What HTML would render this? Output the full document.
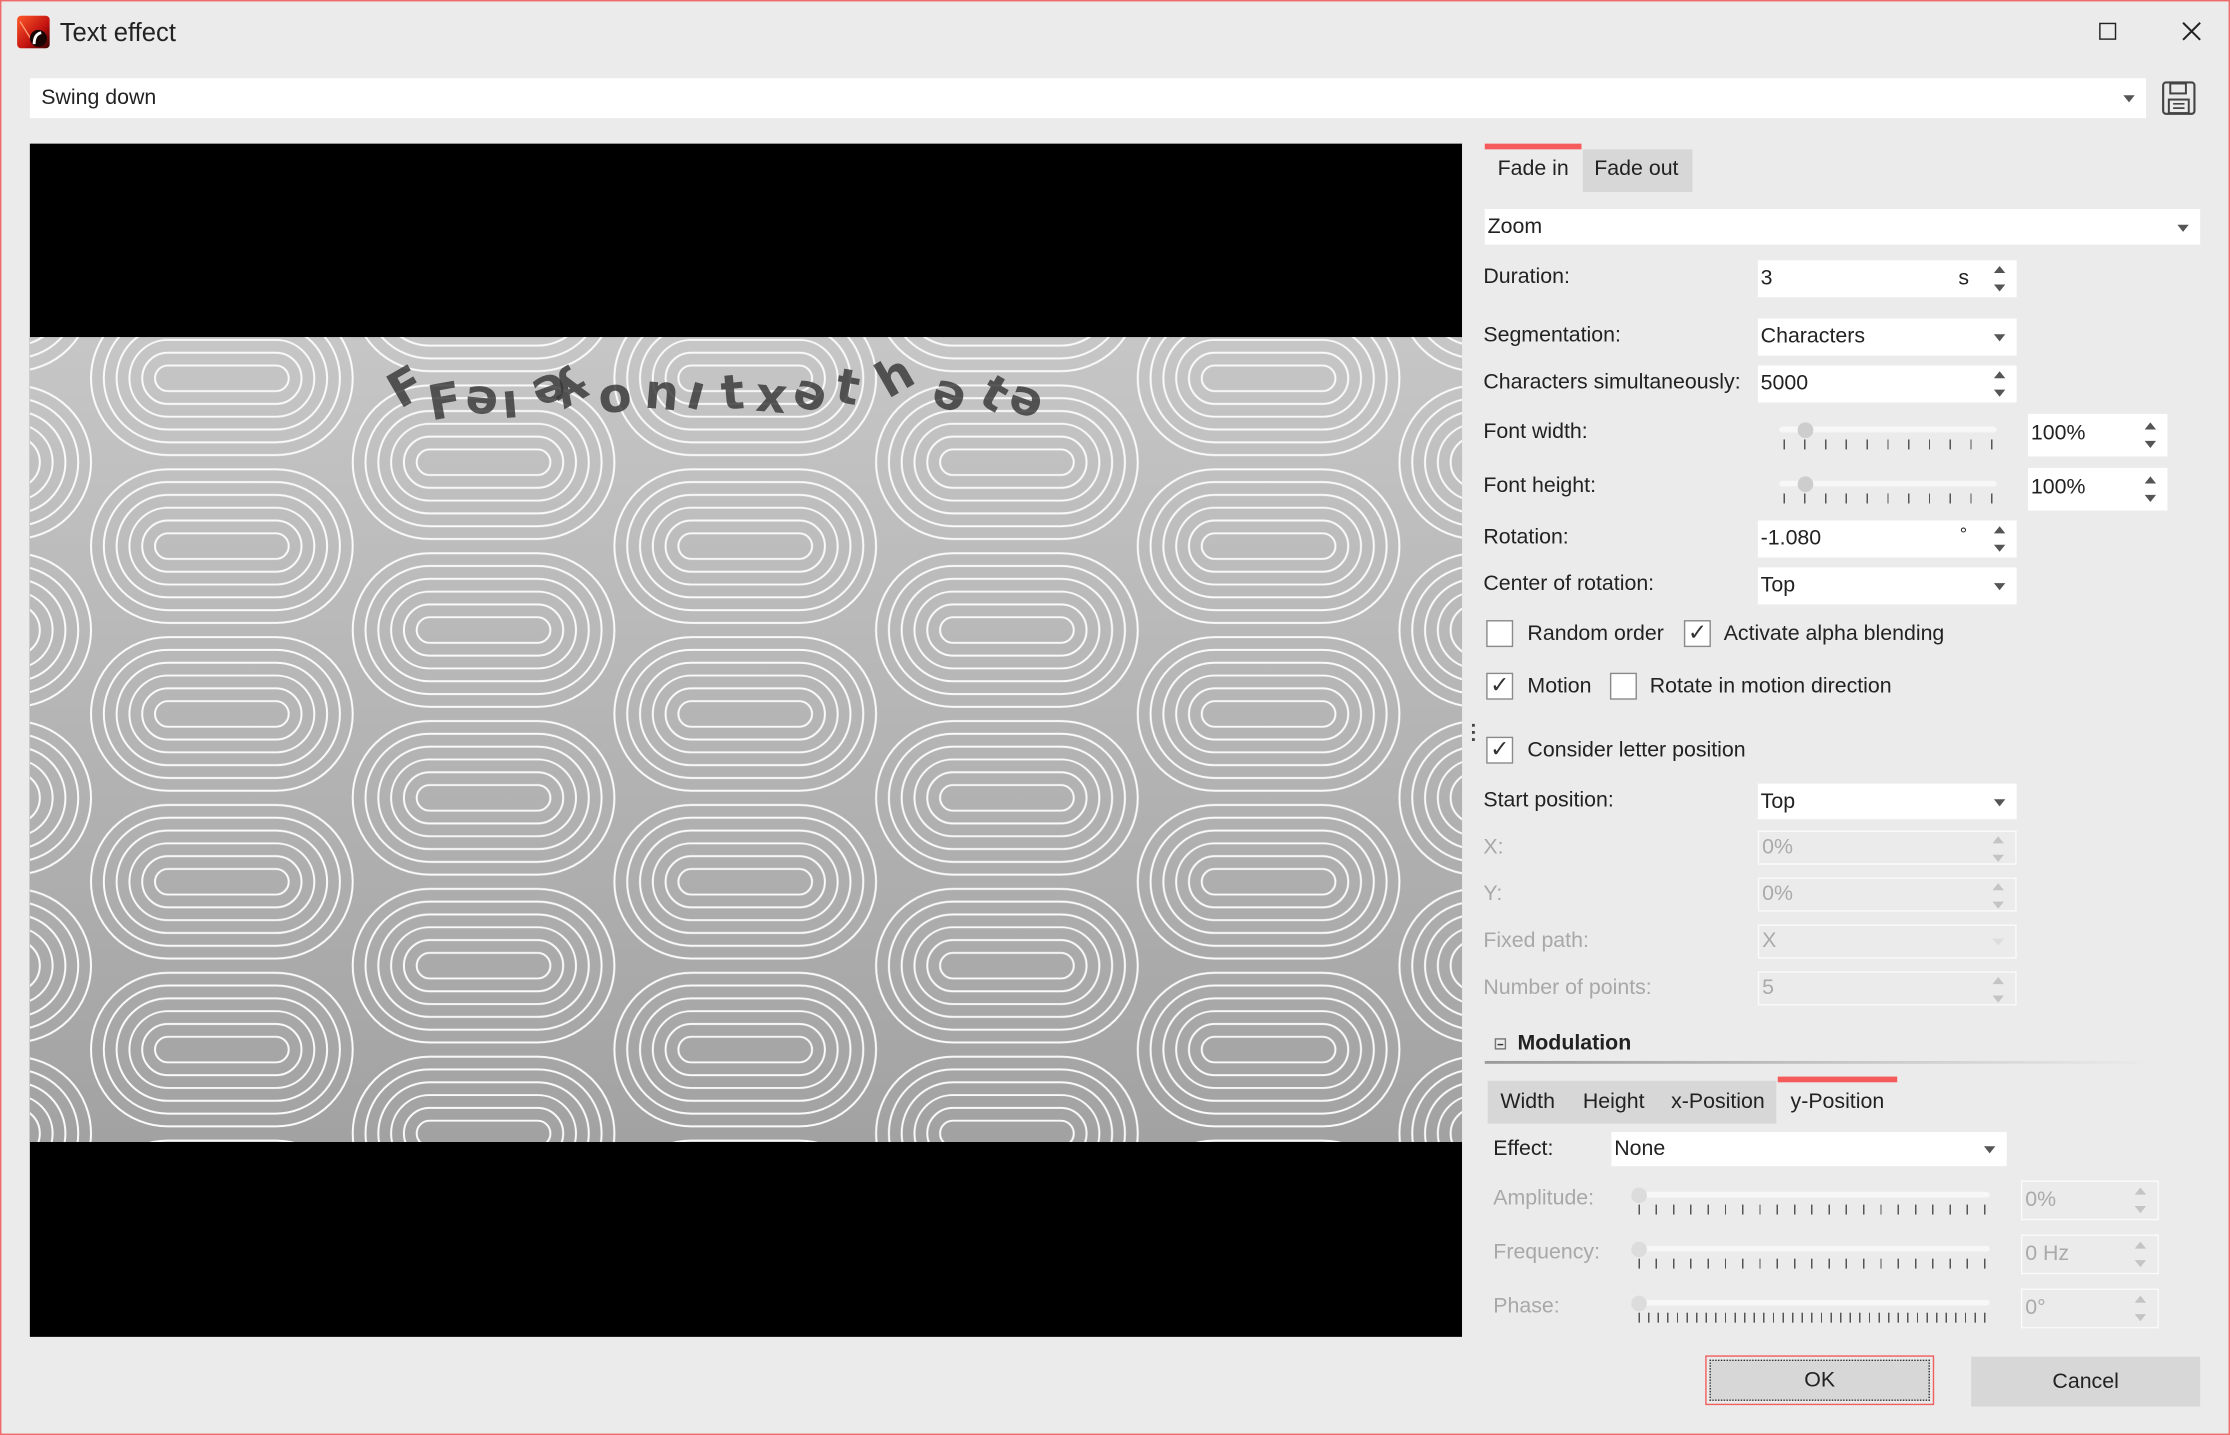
<!DOCTYPE html>
<html><head><meta charset="utf-8"><style>
html,body{margin:0;padding:0;width:2230px;height:1435px;overflow:hidden;background:#ebebeb}
#r{position:absolute;left:0;top:0;width:1568px;height:1009px;transform:scale(1.422194);transform-origin:0 0;background:#ebebeb;font-family:"Liberation Sans",sans-serif;font-size:15px;color:#222;box-sizing:border-box;border:1px solid #f06a6a}
.a{position:absolute;white-space:nowrap}
.lb{position:absolute;left:1042px;line-height:20px}
.dis{color:#a8a8a8}
.in{position:absolute;background:#fff;height:26px;line-height:26px;padding-left:2px;box-sizing:border-box}
.din{position:absolute;background:#ebebeb;border:1px solid #fafafa;height:26px;line-height:24px;padding-left:2px;box-sizing:border-box;color:#aaa}
.dd{position:absolute;right:8px;top:11px;width:0;height:0;border-left:4px solid transparent;border-right:4px solid transparent;border-top:5px solid #555}
.sp{position:absolute;right:8px;top:4px;width:8px;height:18px}
.sp:before{content:"";position:absolute;left:0;top:0;border-left:4px solid transparent;border-right:4px solid transparent;border-bottom:5px solid #555}
.sp:after{content:"";position:absolute;left:0;bottom:0;border-left:4px solid transparent;border-right:4px solid transparent;border-top:5px solid #555}
.sp.g:before{border-bottom-color:#c4c4c4}.sp.g:after{border-top-color:#c4c4c4}
.cb{position:absolute;width:19px;height:19px;border:1px solid #8a8a8a;background:#fff;box-sizing:border-box;font-size:16px;line-height:17px;text-align:center;color:#333}
.trk{position:absolute;height:4px;background:#f7f7f7;border-radius:2px}
.th{position:absolute;width:11px;height:11px;border-radius:6px;background:#cdcdcd}
.tk{position:absolute;height:7px}
.ch{position:absolute;font-family:"DejaVu Sans",sans-serif;font-weight:bold;font-size:34px;color:rgba(55,55,55,.82);line-height:1}
</style></head><body><div id="r">
<!-- title -->
<svg class="a" style="left:11px;top:10px" width="23" height="23" viewBox="0 0 23 23"><defs><linearGradient id="ig" x1="0" y1="0" x2="1" y2="1"><stop offset="0" stop-color="#ff5a2a"/><stop offset=".6" stop-color="#c01010"/><stop offset="1" stop-color="#300"/></linearGradient></defs><rect width="23" height="23" rx="3" fill="url(#ig)"/><path d="M2 4 L12 20" stroke="#ff9a70" stroke-width="1" fill="none"/><circle cx="15" cy="16" r="6" fill="#1a0505"/><path d="M12 20 Q12 13 17 12" stroke="#fff" stroke-width="2" fill="none"/></svg>
<div class="a" style="left:41px;top:12px;font-size:18px;color:#222">Text effect</div>
<div class="a" style="left:1475px;top:15px;width:10px;height:10px;border:1px solid #222"></div>
<svg class="a" style="left:1533px;top:14px" width="14" height="14"><path d="M1 1L13 13M13 1L1 13" stroke="#222" stroke-width="1.4"/></svg>
<!-- preset combo -->
<div class="in" style="left:20px;top:54px;width:1488px;height:28px;line-height:28px;padding-left:8px">Swing down<span class="dd" style="top:12px"></span></div>
<svg class="a" style="left:1518px;top:55px" width="26" height="26" viewBox="0 0 26 26"><rect x="2" y="2" width="22" height="22" rx="2" fill="none" stroke="#444" stroke-width="1.5"/><rect x="7" y="2.7" width="11" height="7" fill="none" stroke="#444" stroke-width="1.4"/><rect x="6" y="14" width="14" height="9.5" fill="none" stroke="#444" stroke-width="1.4"/><path d="M9 17h8M9 20h8" stroke="#444" stroke-width="1.2"/></svg>
<!-- preview -->
<div class="a" style="left:20px;top:100px;width:1007px;height:839px;background:#000"></div>
<svg class="a" style="left:20px;top:236px" width="1007" height="566">
<defs>
<linearGradient id="bg" x1="0" y1="0" x2="0" y2="1"><stop offset="0" stop-color="#c6c6c6"/><stop offset="1" stop-color="#a2a2a2"/></linearGradient>
<g id="st" fill="none" stroke="#fafafa" stroke-width="1.4">
<rect x="-92" y="-54" width="184" height="108" rx="54"/>
<rect x="-83" y="-45" width="166" height="90" rx="45"/>
<rect x="-74" y="-36" width="148" height="72" rx="36"/>
<rect x="-65" y="-27" width="130" height="54" rx="27"/>
<rect x="-56" y="-18" width="112" height="36" rx="18"/>
<rect x="-47" y="-9" width="94" height="18" rx="9"/>
</g>
<pattern id="pt" patternUnits="userSpaceOnUse" width="368" height="118" patternTransform="translate(43 88)">
<use href="#st" x="92" y="59"/><use href="#st" x="276" y="0"/><use href="#st" x="276" y="118"/>
<use href="#st" x="-92" y="0"/><use href="#st" x="-92" y="118"/><use href="#st" x="460" y="59"/>
</pattern>
</defs>
<rect width="1007" height="566" fill="url(#bg)"/>
<rect width="1007" height="566" fill="url(#pt)"/>
</svg>
<!-- rotated text -->
<div class="ch" style="left:272px;top:252px;transform:rotate(150deg)">ꓞ</div>
<div class="ch" style="left:300px;top:262px;transform:rotate(170deg)">ꓞ</div>
<div class="ch" style="left:326px;top:265px;transform:rotate(185deg)">e</div>
<div class="ch" style="left:352px;top:268px;transform:rotate(175deg)">ı</div>
<div class="ch" style="left:374px;top:257px;transform:rotate(160deg)">e</div>
<div class="ch" style="left:390px;top:258px;transform:rotate(150deg)">ɏ</div>
<div class="ch" style="left:420px;top:264px;transform:rotate(175deg)">o</div>
<div class="ch" style="left:452px;top:262px;transform:rotate(185deg)">u</div>
<div class="ch" style="left:482px;top:262px;transform:rotate(195deg)">ı</div>
<div class="ch" style="left:506px;top:262px;transform:rotate(175deg)">ʇ</div>
<div class="ch" style="left:530px;top:264px;transform:rotate(185deg)">x</div>
<div class="ch" style="left:556px;top:262px;transform:rotate(200deg)">e</div>
<div class="ch" style="left:586px;top:258px;transform:rotate(190deg)">ʇ</div>
<div class="ch" style="left:618px;top:250px;transform:rotate(150deg)">ɥ</div>
<div class="ch" style="left:654px;top:262px;transform:rotate(200deg)">e</div>
<div class="ch" style="left:688px;top:262px;transform:rotate(210deg)">ʇ</div>
<div class="ch" style="left:708px;top:266px;transform:rotate(200deg)">e</div>
<!-- splitter -->
<div class="a" style="left:1034px;top:508px;width:2px;height:2px;background:#444;box-shadow:0 5px #444,0 10px #444"></div>
<!-- tabs -->
<div class="a" style="left:1043px;top:100px;width:68px;height:4px;background:#f55b5b"></div>
<div class="a" style="left:1052px;top:109px;line-height:18px">Fade in</div>
<div class="a" style="left:1112px;top:104px;width:77px;height:30px;background:#d7d7d7"></div>
<div class="a" style="left:1120px;top:109px;line-height:18px">Fade out</div>
<div class="in" style="left:1043px;top:146px;width:503px;height:25px;line-height:25px">Zoom<span class="dd"></span></div>
<div class="lb" style="top:184px">Duration:</div>
<div class="in" style="left:1235px;top:182px;width:182px">3<span class="a" style="left:141px">s</span><span class="sp"></span></div>
<div class="lb" style="top:225px">Segmentation:</div>
<div class="in" style="left:1235px;top:223px;width:182px">Characters<span class="dd"></span></div>
<div class="lb" style="top:258px">Characters simultaneously:</div>
<div class="in" style="left:1235px;top:256px;width:182px">5000<span class="sp"></span></div>
<div class="lb" style="top:293px">Font width:</div>
<div class="trk" style="left:1250px;top:299px;width:153px"></div><div class="th" style="left:1263px;top:296px"></div>
<div class="tk" style="left:1253px;top:308px;width:148px;background:repeating-linear-gradient(90deg,#555 0 1px,transparent 1px 14.6px)"></div>
<div class="in" style="left:1425px;top:290px;width:98px;height:30px;line-height:28px">100%<span class="sp" style="top:6px"></span></div>
<div class="lb" style="top:331px">Font height:</div>
<div class="trk" style="left:1250px;top:337px;width:153px"></div><div class="th" style="left:1263px;top:334px"></div>
<div class="tk" style="left:1253px;top:346px;width:148px;background:repeating-linear-gradient(90deg,#555 0 1px,transparent 1px 14.6px)"></div>
<div class="in" style="left:1425px;top:328px;width:98px;height:30px;line-height:28px">100%<span class="sp" style="top:6px"></span></div>
<div class="lb" style="top:367px">Rotation:</div>
<div class="in" style="left:1235px;top:365px;width:182px">-1.080<span class="a" style="left:142px;top:-3px;font-size:13px">°</span><span class="sp"></span></div>
<div class="lb" style="top:400px">Center of rotation:</div>
<div class="in" style="left:1235px;top:398px;width:182px">Top<span class="dd"></span></div>
<div class="cb" style="left:1044px;top:435px"></div><div class="a" style="left:1073px;top:435px;line-height:20px">Random order</div>
<div class="cb" style="left:1183px;top:435px">✓</div><div class="a" style="left:1211px;top:435px;line-height:20px">Activate alpha blending</div>
<div class="cb" style="left:1044px;top:472px">✓</div><div class="a" style="left:1073px;top:472px;line-height:20px">Motion</div>
<div class="cb" style="left:1131px;top:472px"></div><div class="a" style="left:1159px;top:472px;line-height:20px">Rotate in motion direction</div>
<div class="cb" style="left:1044px;top:517px">✓</div><div class="a" style="left:1073px;top:517px;line-height:20px">Consider letter position</div>
<div class="lb" style="top:552px">Start position:</div>
<div class="in" style="left:1235px;top:550px;width:182px;height:25px;line-height:25px">Top<span class="dd"></span></div>
<div class="lb dis" style="top:585px">X:</div>
<div class="din" style="left:1235px;top:583px;width:182px;height:24px;line-height:22px">0%<span class="sp g" style="top:3px"></span></div>
<div class="lb dis" style="top:618px">Y:</div>
<div class="din" style="left:1235px;top:616px;width:182px;height:24px;line-height:22px">0%<span class="sp g" style="top:3px"></span></div>
<div class="lb dis" style="top:651px">Fixed path:</div>
<div class="din" style="left:1235px;top:649px;width:182px;height:24px;line-height:22px">X<span class="dd" style="border-top-color:#ddd;top:9px"></span></div>
<div class="lb dis" style="top:684px">Number of points:</div>
<div class="din" style="left:1235px;top:682px;width:182px;height:24px;line-height:22px">5<span class="sp g" style="top:3px"></span></div>
<!-- modulation -->
<div class="a" style="left:1050px;top:729px;width:6px;height:6px;border:1px solid #777;font-size:0"><div style="margin:2.5px 1px;height:1px;background:#333"></div></div>
<div class="a" style="left:1066px;top:724px;font-weight:bold;line-height:18px">Modulation</div>
<div class="a" style="left:1043px;top:745px;width:470px;height:2px;background:linear-gradient(90deg,#9a9a9a,#ebebeb)"></div>
<div class="a" style="left:1045px;top:759px;width:203px;height:30px;background:#d7d7d7"></div>
<div class="a" style="left:1054px;top:765px;line-height:18px">Width</div>
<div class="a" style="left:1112px;top:765px;line-height:18px">Height</div>
<div class="a" style="left:1174px;top:765px;line-height:18px">x-Position</div>
<div class="a" style="left:1249px;top:756px;width:84px;height:4px;background:#f55b5b"></div>
<div class="a" style="left:1258px;top:765px;line-height:18px">y-Position</div>
<div class="a" style="left:1049px;top:797px;line-height:20px">Effect:</div>
<div class="in" style="left:1132px;top:795px;width:278px;height:24px;line-height:24px">None<span class="dd" style="top:10px"></span></div>
<div class="a dis" style="left:1049px;top:832px;line-height:20px">Amplitude:</div>
<div class="trk" style="left:1147px;top:837px;width:251px"></div><div class="th" style="left:1146px;top:834px;background:#dcdcdc"></div>
<div class="tk" style="left:1151px;top:846px;width:245px;background:repeating-linear-gradient(90deg,#555 0 1px,transparent 1px 12.15px)"></div>
<div class="din" style="left:1420px;top:829px;width:97px;height:28px;line-height:26px">0%<span class="sp g" style="top:4px"></span></div>
<div class="a dis" style="left:1049px;top:870px;line-height:20px">Frequency:</div>
<div class="trk" style="left:1147px;top:875px;width:251px"></div><div class="th" style="left:1146px;top:872px;background:#dcdcdc"></div>
<div class="tk" style="left:1151px;top:884px;width:245px;background:repeating-linear-gradient(90deg,#555 0 1px,transparent 1px 12.15px)"></div>
<div class="din" style="left:1420px;top:867px;width:97px;height:28px;line-height:26px">0 Hz<span class="sp g" style="top:4px"></span></div>
<div class="a dis" style="left:1049px;top:908px;line-height:20px">Phase:</div>
<div class="trk" style="left:1147px;top:913px;width:251px"></div><div class="th" style="left:1146px;top:910px;background:#dcdcdc"></div>
<div class="tk" style="left:1151px;top:922px;width:245px;background:repeating-linear-gradient(90deg,#555 0 1px,transparent 1px 6.75px)"></div>
<div class="din" style="left:1420px;top:905px;width:97px;height:28px;line-height:26px">0°<span class="sp g" style="top:4px"></span></div>
<!-- buttons -->
<div class="a" style="left:1198px;top:952px;width:161px;height:35px;border:1px solid #f06060;box-sizing:border-box;padding:2px"><div style="height:29px;border:1px dotted #333;box-sizing:border-box;background:#d7d7d7;text-align:center;line-height:27px">OK</div></div>
<div class="a" style="left:1385px;top:953px;width:161px;height:35px;background:#d7d7d7;text-align:center;line-height:35px">Cancel</div>
</div></body></html>
